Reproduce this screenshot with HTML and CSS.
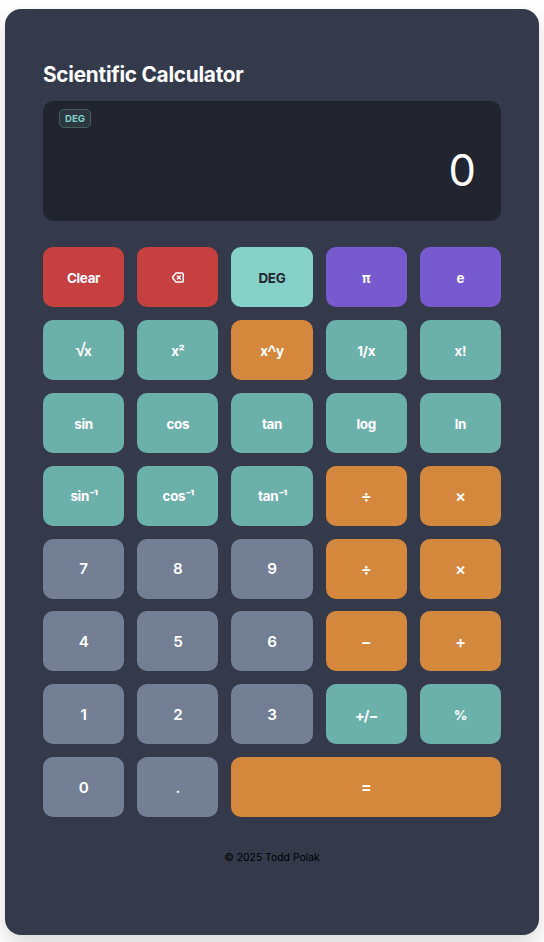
FILE: index.html
```html
<!DOCTYPE html>
<html lang="en">
<head>
<meta charset="utf-8">
<title>Scientific Calculator</title>
<link rel="stylesheet" href="styles.css">
</head>
<body>
<main class="calculator">
  <h1 class="title">Scientific Calculator</h1>
  <div class="display">
    <span class="mode">DEG</span>
    <output class="value">0</output>
  </div>
  <div class="keys">
    <button class="key clear">Clear</button>
    <button class="key clear" aria-label="Backspace"><svg class="backspace" viewBox="0 0 12 11" width="12" height="11" fill="none" stroke="currentColor" stroke-width="1.5" stroke-linejoin="round" stroke-linecap="round"><path d="M4 .9H10a1.2 1.2 0 0 1 1.200 1.200v6.800A1.200 1.200 0 0 1 10 10.100H4L.9 6.300a1.300 1.300 0 0 1 0-1.600ZM5.400 4l3 3M8.400 4l-3 3"/></svg></button>
    <button class="key toggle">DEG</button>
    <button class="key constant">π</button>
    <button class="key constant">e</button>

    <button class="key function"><span><span class="root">√</span>x</span></button>
    <button class="key function">x²</button>
    <button class="key operator"><span>x<span class="caret">^</span>y</span></button>
    <button class="key function">1/x</button>
    <button class="key function">x!</button>

    <button class="key function">sin</button>
    <button class="key function">cos</button>
    <button class="key function">tan</button>
    <button class="key function">log</button>
    <button class="key function">ln</button>

    <button class="key function arc"><span>sin<span class="inverse">⁻¹</span></span></button>
    <button class="key function arc"><span>cos<span class="inverse">⁻¹</span></span></button>
    <button class="key function arc"><span>tan<span class="inverse">⁻¹</span></span></button>
    <button class="key operator symbol">÷</button>
    <button class="key operator symbol">×</button>

    <button class="key number">7</button>
    <button class="key number">8</button>
    <button class="key number">9</button>
    <button class="key operator symbol">÷</button>
    <button class="key operator symbol">×</button>

    <button class="key number">4</button>
    <button class="key number">5</button>
    <button class="key number">6</button>
    <button class="key operator symbol">−</button>
    <button class="key operator symbol">+</button>

    <button class="key number">1</button>
    <button class="key number">2</button>
    <button class="key number">3</button>
    <button class="key function sign">+/−</button>
    <button class="key function">%</button>

    <button class="key number">0</button>
    <button class="key number">.</button>
    <button class="key operator symbol equals">=</button>
  </div>
  <footer class="footer">© 2025 Todd Polak</footer>
</main>
</body>
</html>
```
FILE: styles.css
```css
* {
  box-sizing: border-box;
}

body {
  margin: 0;
  padding: 9px 5px 0;
  height: 942px;
  overflow: hidden;
  background: #fff;
  font-family: Inter, "Liberation Sans", sans-serif;
}

.calculator {
  height: 926px;
  padding: 53px 38px 0;
  border-radius: 16px;
  background: #353a4a;
  box-shadow: 0 10px 20px rgba(0, 0, 0, 0.15);
}

.title {
  margin: 0 0 13px;
  color: #fff;
  font-size: 20.8px;
  font-weight: 700;
  line-height: 26px;
  letter-spacing: -0.26px;
}

.display {
  display: flex;
  flex-direction: column;
  justify-content: space-between;
  height: 120px;
  margin-bottom: 26.4px;
  padding: 8px 26px 24px 16px;
  border-radius: 10px;
  background: #22252f;
}

.mode {
  align-self: flex-start;
  height: 19px;
  padding: 0 5px;
  border: 1px solid #42615f;
  border-radius: 5px;
  background: #2c373f;
  color: #81d0c6;
  font-size: 9.6px;
  font-weight: 700;
  line-height: 17px;
  letter-spacing: -0.05px;
}

.value {
  align-self: flex-end;
  color: #fff;
  font-size: 43.5px;
  font-weight: 400;
  line-height: 54px;
  letter-spacing: -1px;
}

.keys {
  display: grid;
  grid-template-columns: repeat(5, 1fr);
  grid-auto-rows: 60px;
  gap: 12.8px 13px;
}

.key {
  display: flex;
  align-items: center;
  justify-content: center;
  padding: 2px 0 0;
  border: 0;
  border-radius: 10px;
  color: #fff;
  font: 700 13.4px Inter, "Liberation Sans", sans-serif;
  letter-spacing: -0.3px;
}

.backspace {
  display: block;
  margin-bottom: 1px;
}

.clear {
  background: #c64040;
}

.toggle {
  background: #86d1c7;
  color: #22252f;
}

.constant {
  background: #775ad0;
}

.function {
  background: #6cb0aa;
}

.operator {
  background: #d4883e;
}

.number {
  background: #757f93;
  padding: 0.6px 0 0;
  font-size: 15.2px;
  font-weight: 600;
}

.symbol {
  font-size: 16.5px;
  font-weight: 600;
  padding: 0.6px 0 0;
}

.sign {
  font-size: 14.4px;
  letter-spacing: -0.9px;
}

.root {
  font-family: "Liberation Sans", sans-serif;
  font-size: 18px;
  line-height: 12px;
  letter-spacing: -1.8px;
}

.caret {
  font-family: "Liberation Sans", sans-serif;
  font-size: 15px;
  line-height: 1;
}

.arc {
  padding: 0.4px 0 0;
}

.inverse {
  letter-spacing: -1.5px;
}

.equals {
  grid-column: span 3;
}

.footer {
  margin-top: 32.6px;
  color: #000;
  font-size: 10.4px;
  line-height: 16px;
  text-align: center;
}
```
